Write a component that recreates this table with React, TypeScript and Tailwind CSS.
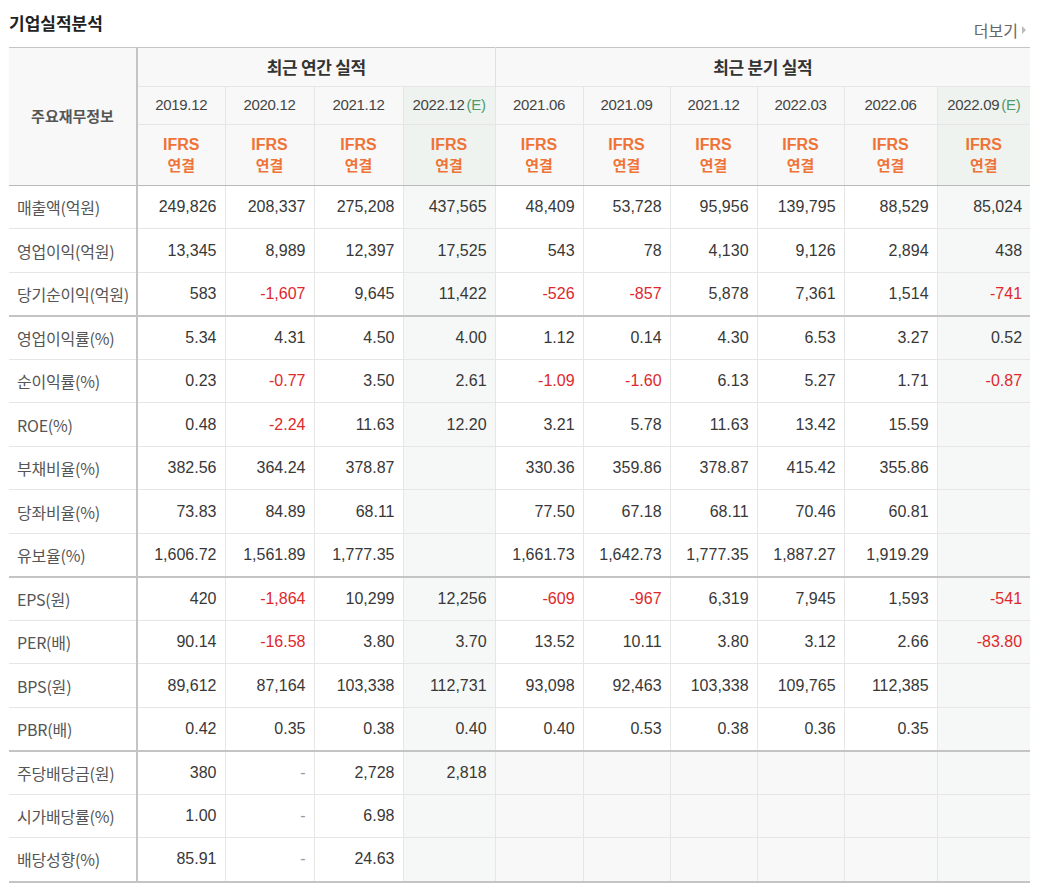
import React from "react";

interface Row {
  label: string;
  annual: string[];
  quarter: string[];
  groupStart?: boolean;
  empty?: boolean;
}

const annualCols = ["2019.12", "2020.12", "2021.12", "2022.12"];
const quarterCols = ["2021.06", "2021.09", "2021.12", "2022.03", "2022.06", "2022.09"];

const rows: Row[] = [
  { label: "매출액(억원)", annual: ["249,826", "208,337", "275,208", "437,565"], quarter: ["48,409", "53,728", "95,956", "139,795", "88,529", "85,024"] },
  { label: "영업이익(억원)", annual: ["13,345", "8,989", "12,397", "17,525"], quarter: ["543", "78", "4,130", "9,126", "2,894", "438"] },
  { label: "당기순이익(억원)", annual: ["583", "-1,607", "9,645", "11,422"], quarter: ["-526", "-857", "5,878", "7,361", "1,514", "-741"] },
  { label: "영업이익률(%)", annual: ["5.34", "4.31", "4.50", "4.00"], quarter: ["1.12", "0.14", "4.30", "6.53", "3.27", "0.52"], groupStart: true },
  { label: "순이익률(%)", annual: ["0.23", "-0.77", "3.50", "2.61"], quarter: ["-1.09", "-1.60", "6.13", "5.27", "1.71", "-0.87"] },
  { label: "ROE(%)", annual: ["0.48", "-2.24", "11.63", "12.20"], quarter: ["3.21", "5.78", "11.63", "13.42", "15.59", ""] },
  { label: "부채비율(%)", annual: ["382.56", "364.24", "378.87", ""], quarter: ["330.36", "359.86", "378.87", "415.42", "355.86", ""] },
  { label: "당좌비율(%)", annual: ["73.83", "84.89", "68.11", ""], quarter: ["77.50", "67.18", "68.11", "70.46", "60.81", ""] },
  { label: "유보율(%)", annual: ["1,606.72", "1,561.89", "1,777.35", ""], quarter: ["1,661.73", "1,642.73", "1,777.35", "1,887.27", "1,919.29", ""] },
  { label: "EPS(원)", annual: ["420", "-1,864", "10,299", "12,256"], quarter: ["-609", "-967", "6,319", "7,945", "1,593", "-541"], groupStart: true },
  { label: "PER(배)", annual: ["90.14", "-16.58", "3.80", "3.70"], quarter: ["13.52", "10.11", "3.80", "3.12", "2.66", "-83.80"] },
  { label: "BPS(원)", annual: ["89,612", "87,164", "103,338", "112,731"], quarter: ["93,098", "92,463", "103,338", "109,765", "112,385", ""] },
  { label: "PBR(배)", annual: ["0.42", "0.35", "0.38", "0.40"], quarter: ["0.40", "0.53", "0.38", "0.36", "0.35", ""] },
  { label: "주당배당금(원)", annual: ["380", "-", "2,728", "2,818"], quarter: ["", "", "", "", "", ""], groupStart: true, empty: true },
  { label: "시가배당률(%)", annual: ["1.00", "-", "6.98", ""], quarter: ["", "", "", "", "", ""], empty: true },
  { label: "배당성향(%)", annual: ["85.91", "-", "24.63", ""], quarter: ["", "", "", "", "", ""], empty: true },
];

const kr = "font-['Noto_Sans_CJK_KR',sans-serif]";
const num = "font-['Liberation_Sans',Arial,sans-serif]";

function valueColor(v: string) {
  if (v === "-") return "text-[#999]";
  if (v.startsWith("-")) return "text-[#e0282c]";
  return "text-[#383838]";
}

function Cell({ v, est, gray, top }: { v: string; est?: boolean; gray?: boolean; top?: boolean }) {
  const bg = est ? "bg-[#f5f8f6]" : gray ? "bg-[#f8f8f8]" : "bg-white";
  return (
    <td
      className={`${bg} ${valueColor(v)} ${num} text-[16px] text-right pr-[8px] border-l border-l-[#e6e6e6] ${
        top ? "border-t-2 border-t-[#c4c4c4]" : "border-t border-t-[#e6e6e6]"
      }`}
    >
      {v}
    </td>
  );
}

function YearHead({ y, est }: { y: string; est?: boolean }) {
  return (
    <th
      className={`${est ? "bg-[#eef3f0]" : "bg-[#f8f8f8]"} border-l border-l-[#e6e6e6] border-t border-t-[#e6e6e6] font-normal text-[15px] text-[#444] ${num} tracking-[-0.3px]`}
    >
      {y}
      {est && <span className="text-[#4f9a6c] ml-[2px]">(E)</span>}
    </th>
  );
}

function IfrsHead({ est }: { est?: boolean }) {
  return (
    <th
      className={`${est ? "bg-[#eef3f0]" : "bg-[#f8f8f8]"} border-l border-l-[#e6e6e6] border-t border-t-[#e6e6e6] border-b border-b-[#b9b9b9] text-[#ef7337] font-bold`}
    >
      <div className={`${num} text-[16px] leading-[20px]`}>IFRS</div>
      <div className={`${kr} text-[15px] leading-[20px]`}>연결</div>
    </th>
  );
}

export default function App() {
  const widths = [128, 88, 89, 89, 92, 88, 87, 87, 87, 93, 93];
  return (
    <div className="w-[1051px] bg-white pl-[9px] pt-[10px]">
      <div className="flex items-end justify-between w-[1021px] h-[37px]">
        <h2 className={`${kr} text-[17px] font-bold text-[#222] leading-[26px] self-start`}>
          기업실적분석
        </h2>
        <a className={`${kr} text-[16px] text-[#666] flex items-center gap-[4px] mb-[5px] mr-[4px]`}>
          더보기
          <span className="w-0 h-0 border-y-[4px] border-y-transparent border-l-[4px] border-l-[#bbb]" />
        </a>
      </div>
      <table className="table-fixed border-collapse w-[1021px] border-t border-t-[#c4c4c4] border-b-2 border-b-[#c4c4c4]">
        <colgroup>
          {widths.map((w, i) => (
            <col key={i} style={{ width: w }} />
          ))}
        </colgroup>
        <thead>
          <tr className="h-[39px]">
            <th
              rowSpan={3}
              className={`${kr} bg-[#f8f8f8] text-[15px] font-bold text-[#555] border-r-2 border-r-[#c4c4c4] border-b border-b-[#b9b9b9]`}
            >
              주요재무정보
            </th>
            <th colSpan={4} className={`${kr} bg-[#f8f8f8] text-[17px] font-bold text-[#333] tracking-[-0.3px]`}>
              최근 연간 실적
            </th>
            <th
              colSpan={6}
              className={`${kr} bg-[#f8f8f8] text-[17px] font-bold text-[#333] border-l border-l-[#e0e0e0] tracking-[-0.3px]`}
            >
              최근 분기 실적
            </th>
          </tr>
          <tr className="h-[38px]">
            {annualCols.map((y, i) => (
              <YearHead key={y} y={y} est={i === 3} />
            ))}
            {quarterCols.map((y, i) => (
              <YearHead key={"q" + y} y={y} est={i === 5} />
            ))}
          </tr>
          <tr className="h-[61px]">
            {widths.slice(1).map((_, i) => (
              <IfrsHead key={i} est={i === 3 || i === 9} />
            ))}
          </tr>
        </thead>
        <tbody>
          {rows.map((r, ri) => (
            <tr key={r.label} className={ri % 2 === 0 ? "h-[43px]" : "h-[44px]"}>
              <td
                className={`${kr} bg-white text-[16px] text-[#555] pl-[8px] tracking-[-0.2px] border-r-2 border-r-[#c4c4c4] ${
                  r.groupStart ? "border-t-2 border-t-[#c4c4c4]" : "border-t border-t-[#e6e6e6]"
                }`}
              >
                {r.label}
              </td>
              {r.annual.map((v, i) => (
                <Cell key={"a" + i} v={v} est={i === 3} top={r.groupStart} />
              ))}
              {r.quarter.map((v, i) => (
                <Cell key={"q" + i} v={v} est={i === 5} gray={r.empty} top={r.groupStart} />
              ))}
            </tr>
          ))}
        </tbody>
      </table>
    </div>
  );
}
